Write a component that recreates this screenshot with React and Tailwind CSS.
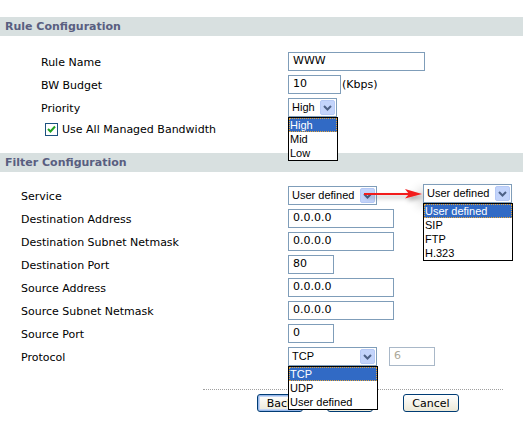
import React from 'react';

/* ── Small XP-style form pieces ─────────────────────────── */

const Chevron = () => (
  <svg width="9" height="6" viewBox="0 0 9 6">
    <path d="M1 1 L4.5 4.5 L8 1" fill="none" stroke="#4d6185" strokeWidth="2" />
  </svg>
);

function TextBox({ value, width, disabled }) {
  return (
    <div
      className={`h-[19px] border bg-white flex items-center px-[4px] ${
        disabled ? 'border-[#a9b8c8] text-[#aca899]' : 'border-[#7f9db9] text-black'
      }`}
      style={{ width }}
    >
      {value}
    </div>
  );
}

function Select({ value, width, options, active }) {
  return (
    <div className="relative" style={{ width }}>
      <div className="h-[19px] border border-[#7f9db9] bg-white flex items-center justify-between pl-[3px] pr-[1px] font-['Liberation_Sans',sans-serif] text-[11px] whitespace-nowrap">
        <span>{value}</span>
        <span className="w-[15px] h-[15px] rounded-[2px] bg-[#c3d4fb] border border-[#b6c9f5] flex items-center justify-center">
          <Chevron />
        </span>
      </div>
      {options && (
        <ul className="absolute left-0 top-full z-10 w-[calc(100%+1px)] border border-black bg-white font-['Liberation_Sans',sans-serif] text-[11px] leading-[14px] whitespace-nowrap">
          {options.map((o) => (
            <li
              key={o}
              className={`h-[14px] pl-[1px] ${
                o === active ? 'bg-[#316ac5] text-white outline outline-1 outline-dotted outline-[#e2a33a] -outline-offset-1' : 'text-black'
              }`}
            >
              {o}
            </li>
          ))}
        </ul>
      )}
    </div>
  );
}

const SectionHeader = ({ children }) => (
  <div className="h-[19px] bg-[#d8e0e0] px-[5px] pt-[2px] flex items-center font-bold text-[#595e80]">
    {children}
  </div>
);

const Row = ({ label, indent, children }) => (
  <div className="h-[23px] flex items-center">
    <div className="w-[288px] shrink-0 pt-[3px]" style={{ paddingLeft: indent }}>
      {label}
    </div>
    {children}
  </div>
);

const XPButton = ({ children, focused, width }) => (
  <button
    className={`h-[18px] rounded-[3px] border border-[#003c74] bg-gradient-to-b from-white to-[#ece9d8] text-[11px] leading-none ${
      focused ? 'shadow-[inset_0_0_0_1px_#98b8ea,inset_0_0_0_2px_#c4d6f4]' : ''
    }`}
    style={{ width }}
  >
    {children}
  </button>
);

/* ── Page ───────────────────────────────────────────────── */

export default function App() {
  return (
    <div className="relative w-[523px] h-[426px] overflow-hidden bg-white pt-[17px] font-['DejaVu_Sans',Verdana,sans-serif] text-[11px] text-black">
      <SectionHeader>Rule Configuration</SectionHeader>

      <div className="pt-[14px]">
        <Row label="Rule Name" indent={41}>
          <TextBox value="WWW" width={137} />
        </Row>
        <Row label="BW Budget" indent={41}>
          <TextBox value="10" width={53} />
          <span className="ml-[1px] pt-[2px]">(Kbps)</span>
        </Row>
        <Row label="Priority" indent={41}>
          <div className="relative z-20">
            <Select value="High" width={49} options={['High', 'Mid', 'Low']} active="High" />
          </div>
        </Row>
        <div className="h-[21px] flex items-center pl-[45px] gap-[4px]">
          <svg width="13" height="13" viewBox="0 0 13 13">
            <rect x="0.5" y="0.5" width="12" height="12" fill="#fff" stroke="#1c5180" />
            <path d="M3 6 L5.5 8.5 L10 3.5" fill="none" stroke="#21a121" strokeWidth="2" />
          </svg>
          <span className="pt-[2px]">Use All Managed Bandwidth</span>
        </div>
      </div>

      <div className="mt-[13px]">
        <SectionHeader>Filter Configuration</SectionHeader>
      </div>

      <div className="pt-[12px]">
        <Row label="Service" indent={21}>
          <Select value="User defined" width={89} />
        </Row>
        <Row label="Destination Address" indent={21}>
          <TextBox value="0.0.0.0" width={106} />
        </Row>
        <Row label="Destination Subnet Netmask" indent={21}>
          <TextBox value="0.0.0.0" width={106} />
        </Row>
        <Row label="Destination Port" indent={21}>
          <TextBox value="80" width={46} />
        </Row>
        <Row label="Source Address" indent={21}>
          <TextBox value="0.0.0.0" width={106} />
        </Row>
        <Row label="Source Subnet Netmask" indent={21}>
          <TextBox value="0.0.0.0" width={106} />
        </Row>
        <Row label="Source Port" indent={21}>
          <TextBox value="0" width={46} />
        </Row>
        <Row label="Protocol" indent={21}>
          <div className="relative z-20">
            <Select value="TCP" width={89} options={['TCP', 'UDP', 'User defined']} active="TCP" />
          </div>
          <div className="ml-[12px]">
            <TextBox value="6" width={46} disabled />
          </div>
        </Row>
      </div>

      <div className="mt-[21px] ml-[203px] w-[300px] border-t border-dotted border-[#a0a0a0]" />
      <div className="mt-[4px] flex pl-[257px]">
        <XPButton focused width={46}>Back</XPButton>
        <div className="ml-[24px]">
          <XPButton width={46}>Apply</XPButton>
        </div>
        <div className="ml-[30px]">
          <XPButton width={56}>Cancel</XPButton>
        </div>
      </div>

      {/* annotation: expanded service list + red arrow */}
      <svg className="absolute left-[362px] top-[186px] z-30" width="64" height="20" viewBox="0 0 64 20">
        <defs>
          <filter id="sh" x="-20%" y="-50%" width="140%" height="250%">
            <feDropShadow dx="2" dy="3" stdDeviation="2" floodColor="#000" floodOpacity="0.3" />
          </filter>
        </defs>
        <g filter="url(#sh)">
          <line x1="2" y1="8" x2="48" y2="8" stroke="#f21d1d" strokeWidth="2" />
          <path d="M43 3 L60 8 L43 12.5 L47 8 Z" fill="#f21d1d" />
        </g>
      </svg>
      <div className="absolute left-[423px] top-[184px] z-20 shadow-[-6px_4px_10px_rgba(0,0,0,0.12)]">
        <Select value="User defined" width={89} options={['User defined', 'SIP', 'FTP', 'H.323']} active="User defined" />
      </div>
    </div>
  );
}
